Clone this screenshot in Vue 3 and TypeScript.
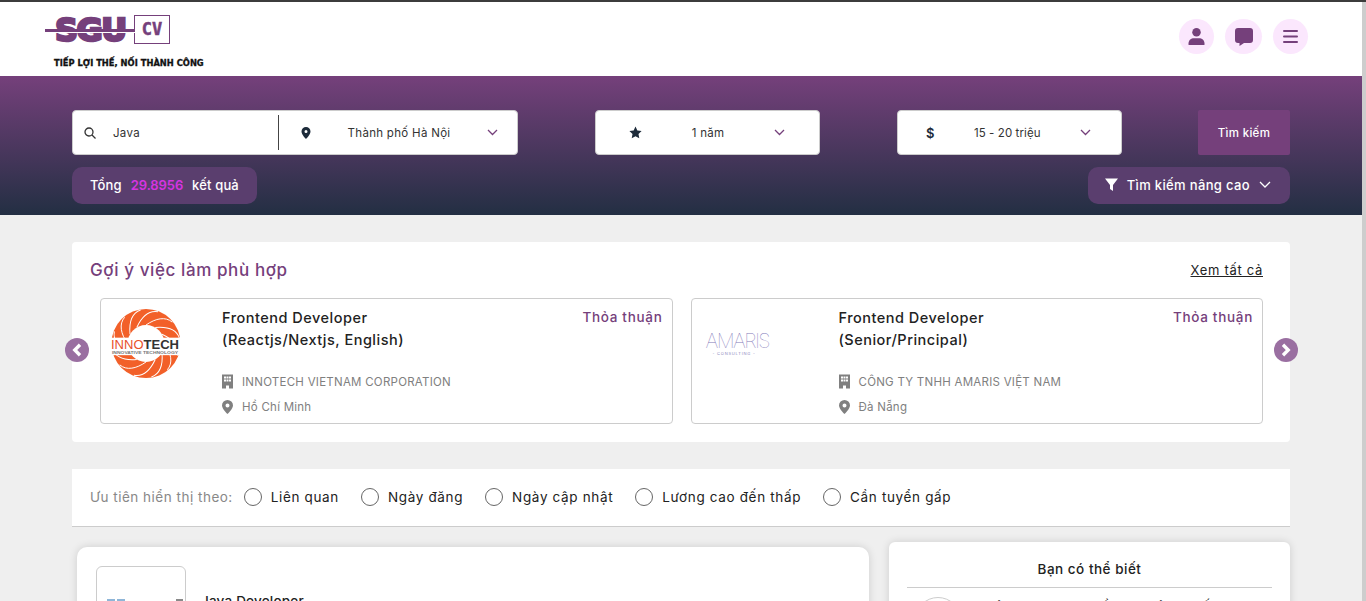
<script setup lang="ts">
interface Job {
  title: string[]
  salary: string
  company: string
  city: string
  logo: 'innotech' | 'amaris'
}

const jobs: Job[] = [
  {
    title: ['Frontend Developer', '(Reactjs/Nextjs, English)'],
    salary: 'Thỏa thuận',
    company: 'INNOTECH VIETNAM CORPORATION',
    city: 'Hồ Chí Minh',
    logo: 'innotech',
  },
  {
    title: ['Frontend Developer', '(Senior/Principal)'],
    salary: 'Thỏa thuận',
    company: 'CÔNG TY TNHH AMARIS VIỆT NAM',
    city: 'Đà Nẵng',
    logo: 'amaris',
  },
]

const sorts = ['Liên quan', 'Ngày đăng', 'Ngày cập nhật', 'Lương cao đến thấp', 'Cần tuyển gấp']
const blades = [0, 30, 60, 90, 120, 150, 180, 210, 240, 270, 300, 330]
</script>

<template>
  <div class="page">
    <div class="content">
      <header class="header">
        <div class="logo">
          <div class="logo-top">
            <span class="logo-sgu">SGU</span>
            <span class="logo-cv">CV</span>
            <i class="logo-line"></i>
          </div>
          <div class="logo-slogan">TIẾP LỢI THẾ, NỐI THÀNH CÔNG</div>
        </div>
        <div class="header-actions">
          <button class="round">
            <svg width="17" height="17" viewBox="0 0 16 16"><circle cx="8" cy="4" r="4" /><path d="M0.5 16v-1.600C0.500 11.400 3 9.600 5.500 9.600h5c2.500 0 5 1.800 5 4.800V16z" /></svg>
          </button>
          <button class="round round-wide">
            <svg width="18" height="18" viewBox="0 0 18 18"><path d="M3 0h12a3 3 0 0 1 3 3v9a3 3 0 0 1-3 3H9l-4.500 3v-3H3a3 3 0 0 1-3-3V3a3 3 0 0 1 3-3z" /></svg>
          </button>
          <button class="round">
            <svg width="15" height="13" viewBox="0 0 15 13"><rect y="0" width="15" height="2" rx="1" /><rect y="5.500" width="15" height="2" rx="1" /><rect y="11" width="15" height="2" rx="1" /></svg>
          </button>
        </div>
      </header>

      <section class="hero">
        <div class="search-row">
          <div class="field field-main">
            <div class="keyword">
              <svg class="ico" width="12" height="12" viewBox="0 0 12 12" fill="none" stroke="#333" stroke-width="1.300"><circle cx="5" cy="5" r="4" /><path d="M8 8l3.500 3.500" /></svg>
              <span>Java</span>
            </div>
            <div class="place">
              <svg class="ico-dark" width="10" height="12" viewBox="0 0 10 12"><path fill-rule="evenodd" d="M5 0a4.500 4.500 0 0 1 4.500 4.500C9.500 7.500 5 12 5 12S.5 7.500.5 4.500A4.500 4.500 0 0 1 5 0zm0 3a1.500 1.500 0 1 0 0 3 1.500 1.500 0 0 0 0-3z" /></svg>
              <span class="grow">Thành phố Hà Nội</span>
              <svg class="chev" width="11" height="7" viewBox="0 0 11 7"><path d="M1 1l4.500 4.500L10 1" /></svg>
            </div>
          </div>
          <div class="field field-small field-exp">
            <svg class="ico-dark" width="13" height="13" viewBox="0 0 24 24"><path d="M12 1l3.400 7.300 7.900 1-5.800 5.500 1.500 7.900L12 18.800l-7 3.900 1.500-7.900L.7 9.300l7.900-1z" /></svg>
            <span class="grow">1 năm</span>
            <svg class="chev" width="11" height="7" viewBox="0 0 11 7"><path d="M1 1l4.500 4.500L10 1" /></svg>
          </div>
          <div class="field field-small field-salary">
            <span class="dollar">$</span>
            <span class="grow">15 - 20 triệu</span>
            <svg class="chev" width="11" height="7" viewBox="0 0 11 7"><path d="M1 1l4.500 4.500L10 1" /></svg>
          </div>
          <button class="search-btn">Tìm kiếm</button>
        </div>
        <div class="result-row">
          <div class="pill total">Tổng <b>29.8956</b> kết quả</div>
          <button class="pill advanced">
            <svg width="13" height="13" viewBox="0 0 13 13"><path d="M0 .5h13L8 7v6L5 11V7z" fill="#fff" /></svg>
            Tìm kiếm nâng cao
            <svg width="12" height="7" viewBox="0 0 12 7" fill="none" stroke="#fff" stroke-width="1.300"><path d="M1 1l5 5 5-5" /></svg>
          </button>
        </div>
      </section>

      <main class="main">
        <section class="suggest">
          <div class="suggest-head">
            <h2>Gợi ý việc làm phù hợp</h2>
            <a class="see-all">Xem tất cả</a>
          </div>
          <div class="carousel">
            <article v-for="job in jobs" :key="job.company" class="job">
              <div class="job-logo" :class="`logo-${job.logo}`">
                <svg v-if="job.logo === 'innotech'" width="70" height="71" viewBox="0 0 72 72">
                  <circle cx="36" cy="36" r="35.500" fill="#f26029" />
                  <circle cx="36" cy="36" r="19" fill="#fff" />
                  <path v-for="a in blades" :key="a" d="M36 17C46 10 56 8 63 14" fill="none" stroke="#fff" stroke-width="1" :transform="`rotate(${a} 36 36)`" />
                  <rect x="0" y="30" width="72" height="18" fill="#fff" />
                  <text x="0" y="42" font-size="12.500" textLength="70" lengthAdjust="spacingAndGlyphs" font-family="'Liberation Sans', sans-serif"><tspan fill="#e8502a">INNO</tspan><tspan fill="#333" font-weight="700">TECH</tspan></text>
                  <text x="1" y="47" font-size="3.600" font-weight="700" fill="#777" textLength="68" lengthAdjust="spacingAndGlyphs" font-family="'Liberation Sans', sans-serif">INNOVATIVE TECHNOLOGY</text>
                </svg>
                <div v-else class="amaris">
                  <span class="amaris-name">AMARIS</span>
                  <span class="amaris-sub">- CONSULTING -</span>
                </div>
              </div>
              <div class="job-body">
                <div class="job-top">
                  <h3>{{ job.title[0] }}<br />{{ job.title[1] }}</h3>
                  <span class="salary">{{ job.salary }}</span>
                </div>
                <div class="meta">
                  <svg width="11" height="15" viewBox="0 0 11 14"><path fill-rule="evenodd" d="M0 0h11v14H7v-3H4v3H0zM2 2v2h2V2zm2.500 0v2h2V2zM7 2v2h2V2zM2 5v2h2V5zm2.500 0v2h2V5zM7 5v2h2V5z" /></svg>
                  <span>{{ job.company }}</span>
                </div>
                <div class="meta">
                  <svg width="11" height="14" viewBox="0 0 11 14"><path fill-rule="evenodd" d="M5.500 0A5.500 5.500 0 0 1 11 5.500C11 9 5.500 14 5.500 14S0 9 0 5.500A5.500 5.500 0 0 1 5.500 0zm0 3.500a2 2 0 1 0 0 4 2 2 0 0 0 0-4z" /></svg>
                  <span>{{ job.city }}</span>
                </div>
              </div>
            </article>
            <button class="arrow arrow-left">
              <svg width="12" height="14" viewBox="0 0 12 14" fill="none" stroke="#fff" stroke-width="3.400"><path d="M9 1.800L3.800 7 9 12.200" /></svg>
            </button>
            <button class="arrow arrow-right">
              <svg width="12" height="14" viewBox="0 0 12 14" fill="none" stroke="#fff" stroke-width="3.400"><path d="M3 1.800L8.200 7 3 12.200" /></svg>
            </button>
          </div>
        </section>

        <section class="sort-bar">
          <span class="sort-label">Ưu tiên hiển thị theo:</span>
          <label v-for="s in sorts" :key="s" class="sort-item">
            <i class="radio"></i>
            <span>{{ s }}</span>
          </label>
        </section>

        <section class="lists">
          <div class="list-card">
            <div class="list-logo">
              <i class="mark mark-blue"></i>
              <i class="mark mark-blue"></i>
              <i class="mark mark-gray"></i>
            </div>
            <div class="list-title">Java Developer</div>
          </div>
          <aside class="side">
            <h4>Bạn có thể biết</h4>
            <div class="side-item">
              <i class="avatar"></i>
              <span>CÔNG TY TNHH ĐẦU TƯ CÔNG TIẾN</span>
            </div>
          </aside>
        </section>
      </main>
    </div>
    <div class="scrollbar"></div>
  </div>
</template>

<style scoped>
.page {
  display: flex;
  height: 601px;
  box-sizing: border-box;
  border-top: 2px solid #3c3c3c;
  overflow: hidden;
  background: #efefef;
  font-family: Inter, "Noto Sans", sans-serif;
  color: #222;
}
.content {
  flex: 1;
  min-width: 0;
}
.scrollbar {
  width: 4px;
  background: #cdcdcd;
}
button {
  border: 0;
  font-family: inherit;
  cursor: pointer;
}
.header {
  height: 74px;
  background: #fff;
  display: flex;
  justify-content: space-between;
  padding: 0 54px 0 45px;
}
.logo-top {
  position: relative;
  display: flex;
  align-items: flex-start;
  padding: 13px 0 0 10px;
  height: 30px;
}
.logo-sgu {
  font-family: "DejaVu Sans", sans-serif;
  font-weight: 700;
  font-size: 32px;
  line-height: 30px;
  letter-spacing: -1.500px;
  color: #75407b;
  -webkit-text-stroke: 2.500px #75407b;
  width: 79px;
}
.logo-cv {
  box-sizing: border-box;
  width: 36px;
  height: 29px;
  border: 1px solid #75407b;
  text-align: center;
  font-family: "DejaVu Sans Mono", monospace;
  font-weight: 700;
  font-size: 17px;
  line-height: 27px;
  color: #75407b;
  -webkit-text-stroke: 0.500px #75407b;
}
.logo-line {
  position: absolute;
  left: 0;
  top: 27px;
  width: 90px;
  height: 3px;
  background: #75407b;
  box-shadow: 0 1px 0 #fff;
}
.logo-slogan {
  margin: 12px 0 0 9px;
  font-family: "DejaVu Sans", sans-serif;
  font-weight: 700;
  font-size: 8.300px;
  line-height: 12px;
  letter-spacing: 0.030px;
  color: #111;
  white-space: nowrap;
  -webkit-text-stroke: 0.300px #111;
}
.header-actions {
  display: flex;
  align-items: center;
  gap: 11px;
  margin-top: -5px;
}
.round {
  width: 35px;
  height: 35px;
  border-radius: 50%;
  background: #fbe7fd;
  display: flex;
  align-items: center;
  justify-content: center;
  padding: 0;
}
.round-wide {
  width: 37px;
}
.round svg {
  fill: #75407b;
}
.hero {
  height: 139px;
  box-sizing: border-box;
  padding: 34px 72px 0;
  background: linear-gradient(180deg, #75407b 0%, #232f43 100%);
}
.search-row {
  display: flex;
  gap: 77px;
}
.field {
  flex: none;
  height: 45px;
  box-sizing: border-box;
  background: #fff;
  border: 1px solid #ccc;
  border-radius: 4px;
  display: flex;
  align-items: center;
  font-size: 11.500px;
  letter-spacing: 0.300px;
  color: #333;
}
.field-main {
  width: 446px;
}
.keyword {
  width: 206px;
  box-sizing: border-box;
  height: 35px;
  display: flex;
  align-items: center;
  gap: 17px;
  padding-left: 11px;
  border-right: 1px solid #444;
}
.place {
  flex: 1;
  display: flex;
  align-items: center;
  padding: 0 19px 0 22px;
}
.grow {
  flex: 1;
  text-align: center;
}
.field-small {
  width: 225px;
}
.field-exp {
  padding: 0 34px 0 33px;
}
.field-salary {
  padding: 0 30px 0 28px;
  letter-spacing: 0.100px;
}
.ico-dark {
  fill: #1d2b3a;
  flex: none;
}
.dollar {
  font-size: 13px;
  font-weight: 600;
  color: #1d2b3a;
}
.chev {
  fill: none;
  stroke: #75407b;
  stroke-width: 1.300;
  flex: none;
}
.search-btn {
  flex: none;
  margin-left: -1px;
  width: 92px;
  height: 45px;
  border-radius: 2px;
  background: #75407b;
  color: #fff;
  font-size: 11.500px;
  letter-spacing: 0.300px;
  font-weight: 500;
}
.result-row {
  display: flex;
  justify-content: space-between;
  margin-top: 12px;
}
.pill {
  height: 37px;
  box-sizing: border-box;
  border-radius: 10px;
  background: #5a3e6e;
  color: #fff;
  font-size: 13px;
  letter-spacing: 0.350px;
  font-weight: 500;
  display: flex;
  align-items: center;
  gap: 9px;
}
.total {
  padding: 0 18px 2px;
  letter-spacing: 0.150px;
}
.total b {
  color: #d534e0;
  font-weight: 600;
  letter-spacing: -0.100px;
}
.advanced {
  padding: 0 19px 2px 17px;
  gap: 9px;
}
.main {
  padding: 27px 72px 0;
}
.suggest {
  height: 200px;
  box-sizing: border-box;
  background: #fff;
  border-radius: 4px;
  padding: 17px 27px 0 18px;
}
.suggest-head {
  display: flex;
  justify-content: space-between;
  align-items: center;
  height: 22px;
}
h2 {
  margin: 0;
  font-size: 17px;
  letter-spacing: 0.600px;
  font-weight: 500;
  color: #75407b;
}
.see-all {
  font-size: 13px;
  letter-spacing: 0.700px;
  color: #222;
  text-decoration: underline;
}
.carousel {
  position: relative;
  display: grid;
  grid-template-columns: 1fr 1fr;
  gap: 18px;
  margin: 17px 0 0 10px;
}
.job {
  height: 126px;
  box-sizing: border-box;
  border: 1px solid #ccc;
  border-radius: 4px;
  display: flex;
  padding: 8px 9px 0 10px;
}
.job-logo {
  flex: none;
  height: 72px;
  margin-top: 1px;
}
.logo-innotech {
  width: 111px;
}
.logo-amaris {
  width: 137px;
}
.amaris {
  display: flex;
  flex-direction: column;
  align-items: flex-start;
  padding: 23px 0 0 4px;
}
.amaris-name {
  font-weight: 100;
  font-size: 20px;
  line-height: 20px;
  letter-spacing: -1.600px;
  color: #7f79b8;
}
.amaris-sub {
  font-size: 4px;
  line-height: 6px;
  letter-spacing: 0.800px;
  color: #8d87bd;
  margin-left: 7px;
}
.job-body {
  flex: 1;
  min-width: 0;
}
.job-top {
  display: flex;
  justify-content: space-between;
  height: 62px;
}
h3 {
  margin: 0;
  font-size: 14.500px;
  letter-spacing: 0.500px;
  line-height: 22px;
  font-weight: 500;
  color: #222;
}
.salary {
  font-size: 13.500px;
  letter-spacing: 0.700px;
  font-weight: 500;
  line-height: 20px;
  color: #75407b;
}
.meta {
  display: flex;
  align-items: center;
  gap: 9px;
  height: 25px;
  font-size: 11.500px;
  letter-spacing: 0.250px;
  color: #808080;
}
.meta svg {
  fill: #808080;
  flex: none;
}
.arrow {
  position: absolute;
  top: 40px;
  width: 24px;
  height: 24px;
  padding: 0;
  border-radius: 50%;
  background: #9a6fa1;
  display: flex;
  align-items: center;
  justify-content: center;
}
.arrow-left {
  left: -35px;
}
.arrow-right {
  right: -35px;
}
.sort-bar {
  margin-top: 27px;
  height: 58px;
  box-sizing: border-box;
  background: #fff;
  border-bottom: 1px solid #ccc;
  display: flex;
  align-items: center;
  padding: 0 18px 1px;
  font-size: 13.500px;
  letter-spacing: 0.650px;
  color: #222;
}
.sort-label {
  color: #888;
  letter-spacing: 0.500px;
  margin-right: 11px;
}
.sort-item {
  display: flex;
  align-items: center;
  gap: 9px;
  margin-right: 22px;
}
.radio {
  width: 18px;
  height: 18px;
  box-sizing: border-box;
  border: 1px solid #666;
  border-radius: 50%;
}
.lists {
  display: flex;
  align-items: flex-start;
  padding: 15px 0 0 5px;
  gap: 20px;
}
.list-card {
  width: 792px;
  height: 200px;
  margin-top: 5px;
  flex: none;
  background: #fff;
  border-radius: 10px;
  box-shadow: 0 0 8px rgba(0, 0, 0, 0.14);
  display: flex;
  padding: 19px 0 0 19px;
  box-sizing: border-box;
}
.list-logo {
  width: 90px;
  height: 90px;
  box-sizing: border-box;
  border: 1px solid #ccc;
  border-radius: 6px;
  display: flex;
  gap: 2px;
  padding: 32px 2px 0 10px;
}
.mark {
  width: 8px;
  height: 5px;
}
.mark-blue {
  background: #8fb6d8;
}
.mark-gray {
  background: #8a8a8a;
  margin-left: auto;
  width: 7px;
}
.list-title {
  margin: 27px 0 0 15px;
  font-size: 13.500px;
  letter-spacing: 0.200px;
  font-weight: 500;
  color: #222;
}
.side {
  flex: 1;
  height: 200px;
  box-sizing: border-box;
  background: #fff;
  border-radius: 6px;
  box-shadow: 0 0 8px rgba(0, 0, 0, 0.14);
  padding: 0 18px;
}
h4 {
  margin: 0;
  height: 46px;
  line-height: 54px;
  box-sizing: border-box;
  border-bottom: 1px solid #ccc;
  text-align: center;
  font-size: 13.500px;
  letter-spacing: 0.500px;
  font-weight: 500;
  color: #222;
}
.side-item {
  display: flex;
  gap: 24px;
  padding: 9px 0 0 8px;
  font-size: 12px;
  letter-spacing: 0.800px;
  font-weight: 500;
}
.side-item span {
  padding-top: 3px;
  white-space: nowrap;
}
.avatar {
  width: 46px;
  height: 46px;
  box-sizing: border-box;
  border: 1px solid #ccc;
  border-radius: 50%;
  flex: none;
}
</style>
